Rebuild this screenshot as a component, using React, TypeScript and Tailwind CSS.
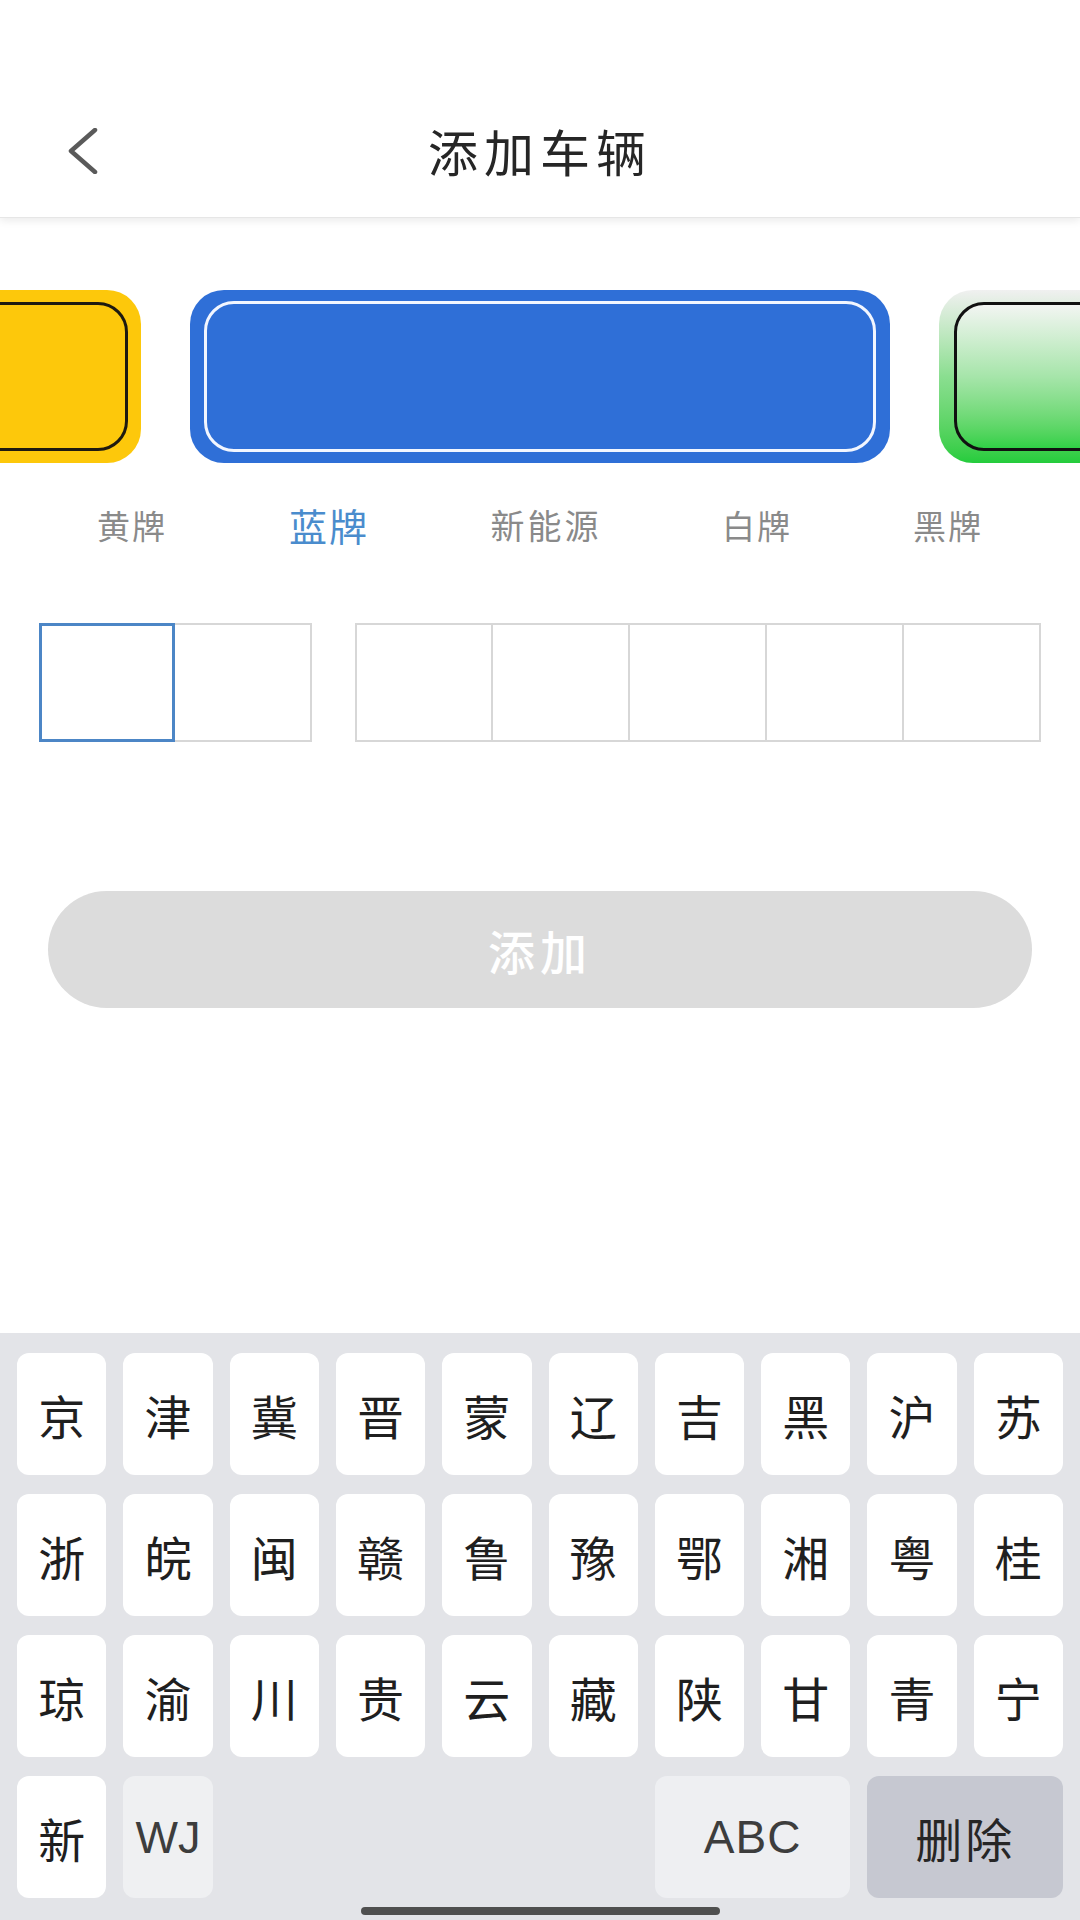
import React from "react";

const rows: string[][] = [
  ["京", "津", "冀", "晋", "蒙", "辽", "吉", "黑", "沪", "苏"],
  ["浙", "皖", "闽", "赣", "鲁", "豫", "鄂", "湘", "粤", "桂"],
  ["琼", "渝", "川", "贵", "云", "藏", "陕", "甘", "青", "宁"],
];

function Key({ ch }: { ch: string }) {
  return (
    <div className="h-[122px] rounded-[12px] bg-white flex items-center justify-center text-[47px] text-[#1f1f1f] leading-none">
      {ch}
    </div>
  );
}

export default function App() {
  return (
    <div className="relative w-[1080px] h-[1920px] flex flex-col bg-white overflow-hidden font-['Noto_Sans_CJK_SC','Noto_Sans',sans-serif]">
      {/* Header */}
      <div className="bg-white shadow-[0_3px_8px_rgba(0,0,0,0.08)] border-b border-[#e6e6e6] z-10">
        <div className="h-[84px]" />
        <div className="h-[133px] grid grid-cols-[1fr_auto_1fr] items-center px-[66px]">
          <div className="flex items-center">
            <svg width="34" height="46" viewBox="0 0 34 46" fill="none">
              <path d="M29 2 L5 23 L29 44" stroke="#5a5a5a" strokeWidth="4.5" strokeLinecap="round" strokeLinejoin="round" />
            </svg>
          </div>
          <div className="text-[50px] tracking-[6px] text-[#262626] leading-none pb-[2px]">添加车辆</div>
          <div />
        </div>
      </div>

      {/* Plate carousel */}
      <div className="mt-[72px] flex justify-center gap-[49px] overflow-hidden">
        <div className="shrink-0 w-[700px] h-[173px] rounded-[34px] bg-[#fdc80b] p-[12px] pr-[13px]">
          <div className="w-full h-full rounded-[30px] border-[3px] border-[#1e1a10]" />
        </div>
        <div className="shrink-0 w-[700px] h-[173px] rounded-[34px] bg-[#2f6fd7] px-[14px] py-[11px]">
          <div className="w-full h-full rounded-[30px] border-[3px] border-[#f2f6ff]" />
        </div>
        <div className="shrink-0 w-[700px] h-[173px] rounded-[34px] bg-gradient-to-b from-[#f0f0f0] via-[#8ade90] to-[#23cc3c] px-[15px] py-[12px]">
          <div className="w-full h-full rounded-[30px] border-[3px] border-[#111] bg-gradient-to-b from-[#f2f5f2] via-[#a6e5aa] to-[#2fd046]" />
        </div>
      </div>

      {/* Labels */}
      <div className="mt-[32px] h-[60px] flex items-center pl-[42px]">
        <div className="w-[180px] text-center text-[33px] tracking-[2px] text-[#8a8a8a] leading-none">黄牌</div>
        <div className="ml-[17px] w-[180px] text-center text-[38px] tracking-[2px] text-[#4a8ccd] leading-none">蓝牌</div>
        <div className="ml-[37px] w-[180px] text-center text-[34px] tracking-[3px] text-[#8a8a8a] leading-none">新能源</div>
        <div className="ml-[31px] w-[180px] text-center text-[33px] tracking-[2px] text-[#8a8a8a] leading-none">白牌</div>
        <div className="ml-[11px] w-[180px] text-center text-[33px] tracking-[2px] text-[#8a8a8a] leading-none">黑牌</div>
      </div>

      {/* Input boxes */}
      <div className="mt-[68px] flex pl-[39px] gap-[43px]">
        <div className="flex">
          <div className="w-[136px] h-[119px] border-[3px] border-[#4c86c6]" />
          <div className="w-[137px] h-[119px] border-[2px] border-l-0 border-[#d7d7d7]" />
        </div>
        <div className="flex">
          {[0, 1, 2, 3, 4].map((i) => (
            <div
              key={i}
              className={
                i === 0
                  ? "w-[138px] h-[119px] border-[2px] border-[#d7d7d7]"
                  : "w-[137px] h-[119px] border-[2px] border-l-0 border-[#d7d7d7]"
              }
            />
          ))}
        </div>
      </div>

      {/* Add button */}
      <div className="mt-[149px] mx-[48px] h-[117px] rounded-full bg-[#dcdcdc] flex items-center justify-center">
        <span className="text-[47px] tracking-[5px] text-white leading-none font-medium">添加</span>
      </div>

      <div className="flex-1" />

      {/* Keyboard */}
      <div className="relative h-[587px] bg-[#e3e4e8] pt-[20px] px-[17px]">
        <div className="grid grid-cols-10 gap-x-[17px] gap-y-[19px]">
          {rows.flat().map((c) => (
            <Key key={c} ch={c} />
          ))}
          <Key ch="新" />
          <div className="h-[122px] rounded-[12px] bg-[#eff0f2] flex items-center justify-center text-[45px] text-[#3d3d3d] leading-none font-['Liberation_Sans',sans-serif]">
            WJ
          </div>
          <div className="col-span-4" />
          <div className="col-span-2 h-[122px] rounded-[12px] bg-[#eeeff2] flex items-center justify-center text-[46px] text-[#3d3d3d] leading-none tracking-[1px] font-['Liberation_Sans',sans-serif]">
            ABC
          </div>
          <div className="col-span-2 h-[122px] rounded-[12px] bg-[#c6c8d1] flex items-center justify-center text-[47px] tracking-[3px] text-[#262626] leading-none">
            删除
          </div>
        </div>
        <div className="absolute left-[361px] bottom-[5px] w-[359px] h-[8px] rounded-full bg-[#4f4f4f]" />
      </div>
    </div>
  );
}
